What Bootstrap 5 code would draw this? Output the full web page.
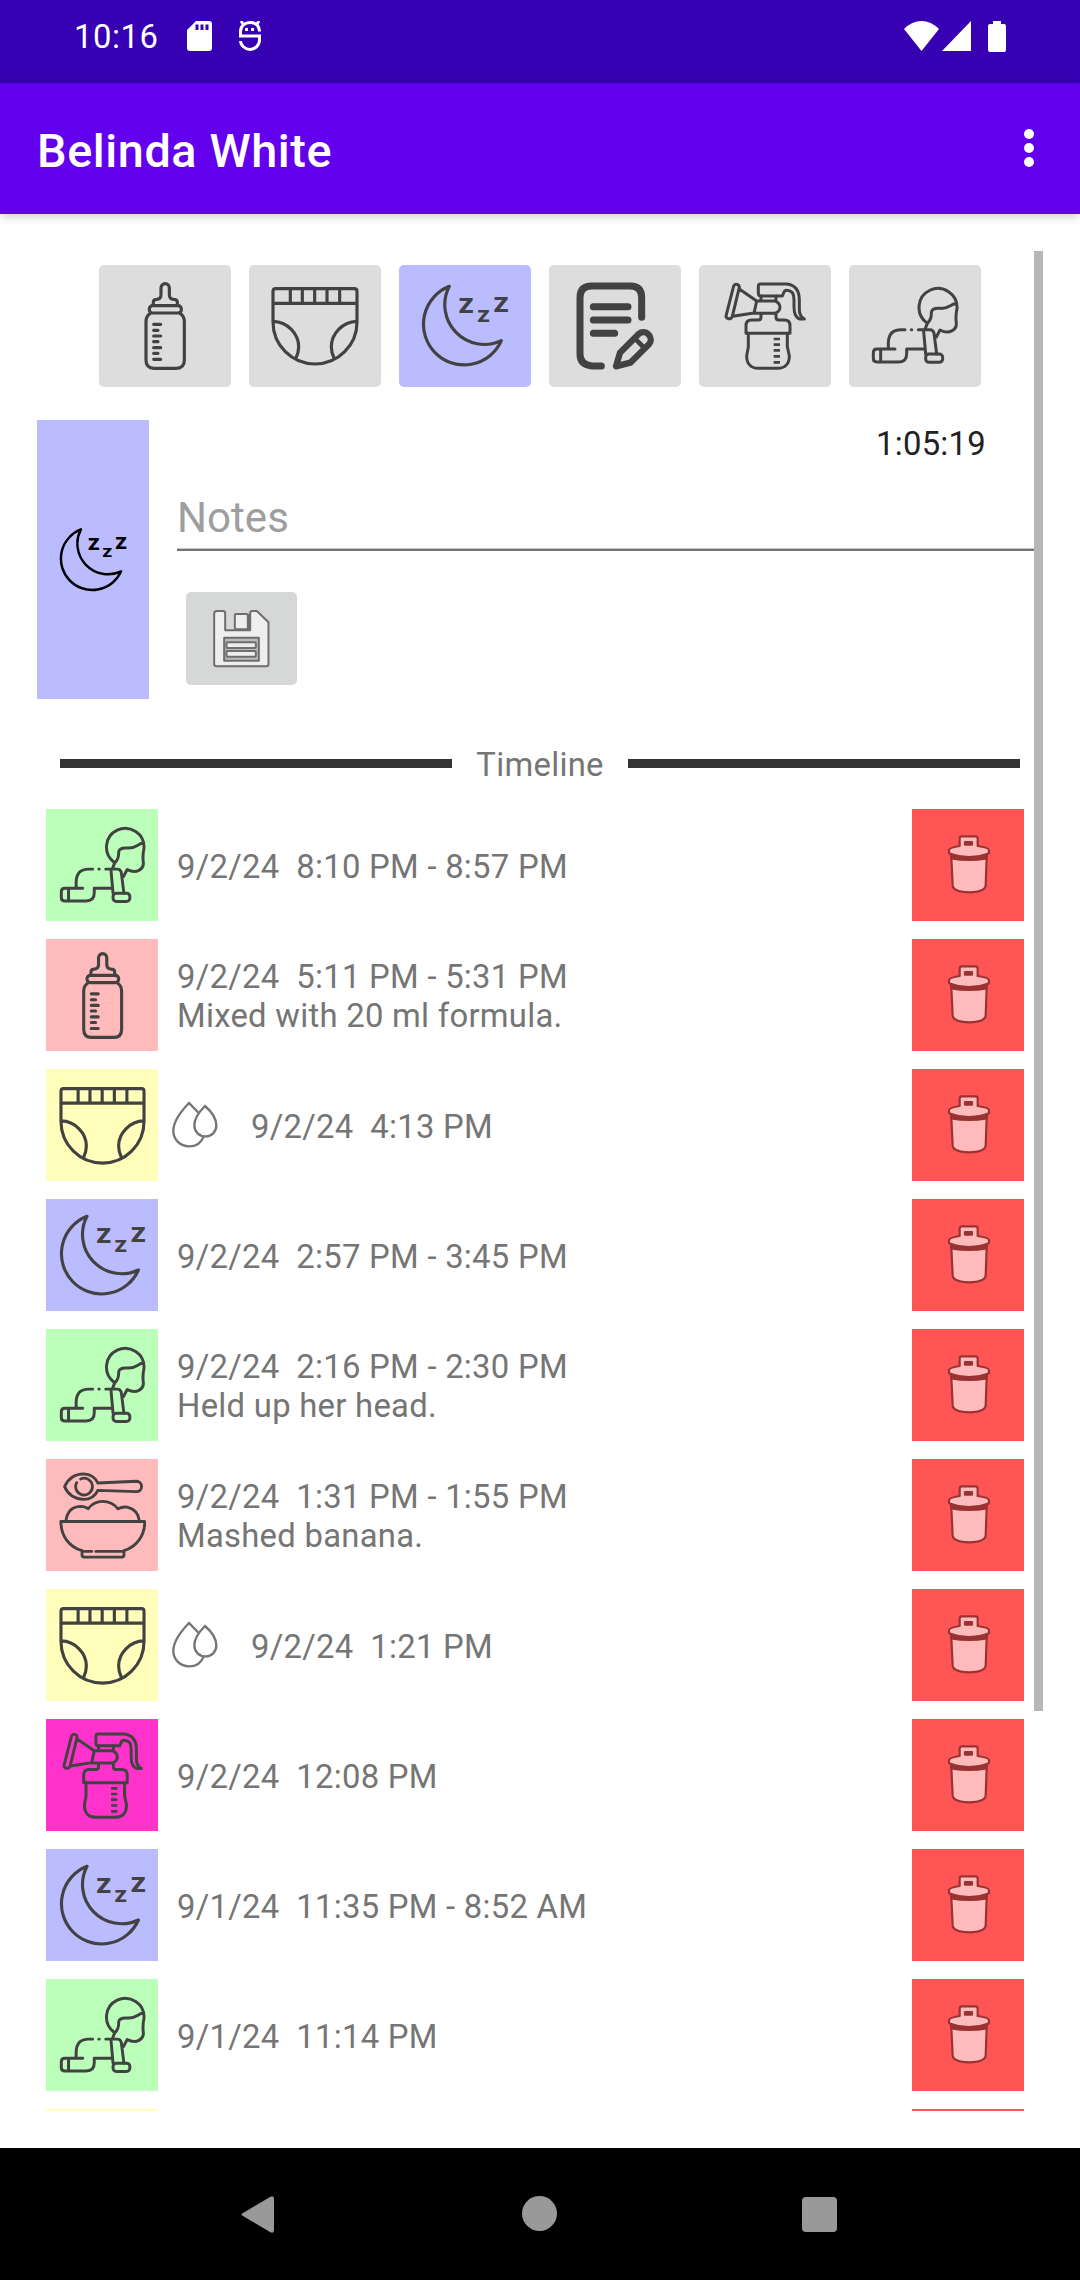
<!DOCTYPE html>
<html lang="en">
<head>
<meta charset="utf-8">
<meta name="viewport" content="width=device-width, initial-scale=1">
<title>Belinda White</title>
<link rel="stylesheet" href="https://cdn.jsdelivr.net/npm/bootstrap@5.3.0/dist/css/bootstrap.min.css">
<style>
body{font-family:Roboto,"Noto Sans",sans-serif;font-size:32.8px;letter-spacing:.28px;line-height:38.7px;color:#757575;background:#fff;width:1080px;height:2280px;overflow:hidden}
svg{display:block;flex:none}
.status-strip{height:83px;background:#3700b3;padding:0 74px 11px 74px}
.clock{letter-spacing:.58px;padding-top:3px}
.sd-icon{margin-left:28px}
.app-bar{height:131px;background:#6200ee;padding:0 45px 0 37px;box-shadow:0 2px 10px rgba(0,0,0,.22);position:relative;z-index:2}
.app-bar svg{margin-bottom:2px}
.app-title{font-size:46.8px;font-weight:500;letter-spacing:.58px;line-height:56px;padding-top:5px}
.screen{height:1934px;padding:37px}
.scroller{height:1860px;overflow:hidden;position:relative;padding-top:14px}
.scroll-thumb{position:absolute;right:0;top:0;width:9px;height:1460px;background:#b7b7b7}
.kinds{gap:18px}
.kind{width:132px;height:122px;border-radius:5px;background:#ddd;border:0;padding:0;color:#424242}
.sleep{background:#bbf!important}.play{background:#bfb}.feed{background:#fbb}.change{background:#ffb}.pump{background:#ff33cc}
.entry{height:279px;margin-top:33px}
.entry-kind{width:112px;color:#000}
.entry-form{margin-left:28px}
.timer{color:#212121;padding:5px 57px 0 0;height:43px;line-height:39px}
.notes{height:88px;font-size:42.1px;letter-spacing:0;color:#9e9e9e;border-bottom:2px solid #747474;box-shadow:inset 0 -1px #c4c4c4;padding-top:30px;line-height:50px}
.save-btn{width:111px;height:93px;margin:41px 0 0 9px;border-radius:5px;border:0;background:#d6d8d7;padding:0}
.divider{height:110px;padding:22px 23px 0 23px;gap:24px}
.divider i{height:9px;background:#333;flex:1;margin-top:-3px}
.log{gap:18px;padding:0 19px 0 9px}
.log-row{height:112px;flex:none}
.tile{width:112px;height:112px;flex:none;color:#424242}
.del{background:#f55}
.when{white-space:pre;margin-left:19px;padding-top:4px}
.wet-icon{margin:0 13px}
.sys-nav{height:132px;background:#000}
</style>
<script src="https://cdn.jsdelivr.net/npm/bootstrap@5.3.0/dist/js/bootstrap.bundle.min.js"></script>
</head>
<body>
<svg width="0" height="0" class="d-none">
<symbol id="bottle" viewBox="0 0 264 264"><g fill="none" stroke="currentColor" stroke-width="9.500" stroke-linecap="round" stroke-linejoin="round"><path d="M97 69V61Q97 52 107 52Q120 51 120 38V18A12.500 13 0 0 1 145 18V38Q145 51 158 52Q169 52 169 61V69"/><rect x="85" y="71" width="96" height="22" rx="10"/><path d="M88 94Q75 102 75 119V235Q75 259 99 259H166Q190 259 190 235V119Q190 102 177 94"/><path d="M98 127H119M98 145H111M98 162H119M98 179H111M98 197H119M98 214H111M98 232H119"/></g></symbol>
<symbol id="diaper" viewBox="0 0 264 264"><g fill="none" stroke="currentColor" stroke-width="9.500"><path d="M6 120V28Q6 20 14 20H250Q258 20 258 28V120A126 126 0 0 1 6 120ZM6 64H258M58 20V64M94 20V64M131 20V64M168 20V64M206 20V64M6 118C50 119 83 156 83 194Q83 211 75 228M258 118C214 119 181 156 181 194Q181 211 189 228"/></g></symbol>
<symbol id="moon" viewBox="0 0 264 264"><path d="M85 13A122 122 0 1 0 241 176A119 119 0 0 1 85 13Z" fill="none" stroke="currentColor" stroke-width="9.500" stroke-linejoin="round"/><g fill="currentColor" font-family="Roboto" font-weight="700" letter-spacing="0"><text x="112" y="94" font-size="85" textLength="47" lengthAdjust="spacingAndGlyphs">z</text><text x="168" y="120" font-size="67" textLength="39" lengthAdjust="spacingAndGlyphs">z</text><text x="217" y="91" font-size="85" textLength="47" lengthAdjust="spacingAndGlyphs">z</text></g></symbol>
<symbol id="memo" viewBox="0 0 264 264"><g fill="none" stroke="currentColor" stroke-width="21" stroke-linecap="round" stroke-linejoin="round"><path d="M91 252H62Q27 248 27 217V47Q27 12 62 12H178Q212 12 212 47V106M67 74H171M67 114H171M67 154H131"/><path stroke-width="19" d="M135 253L147 212L203 156A22 22 0 0 1 234 187L178 242Z"/><path stroke-width="14" d="M192 170L220 198"/></g></symbol>
<symbol id="pumper" viewBox="0 0 264 264"><g fill="none" stroke="currentColor" stroke-width="9" stroke-linejoin="round" stroke-linecap="round"><path d="M38 12Q42 4 50 8Q57 11 54 20L34 103Q30 112 22 110Q13 107 16 98ZM56 22L107 57M35 103L99 93M107 57H158A19 18.500 0 0 1 158 94H99ZM120 42V57M165 42V57M120 95V106Q120 114 112 114H92Q75 114 75 131V154H207V131Q207 114 190 114H173Q165 114 165 106V95"/><path d="M118 6H197Q235 10 235 54V84Q235 102 250 111H236Q219 105 219 75V54C219 33 212 25 197 25Q190 25 188 33L184 42H120Q112 42 112 34V14Q112 6 118 6ZM82 154V194L77 222C77 247 91 259 112 259H170C191 259 205 247 205 222L199 194V154"/><path stroke-linecap="butt" stroke-width="8" d="M158 171H177M158 188H177M158 205H177M158 223H177M158 241H177"/></g></symbol>
<symbol id="baby" viewBox="0 0 264 264"><g fill="none" stroke="currentColor" stroke-width="9" stroke-linejoin="round" stroke-linecap="round"><path d="M167 122A57 57 0 1 1 258 79Q253 102 256 124C257 143 235 159 207 144L196 165M257 63C236 67 235 81 208 79Q183 77 181 91C182 108 178 116 169 124L162 142M142 143H177Q186 143 189 153L197 216M158 149L164 216M72 201H18Q7 201 7 212V229Q7 240 18 240H82Q107 240 107 215V201H160M29 201V240M52 201V182Q53 143 90 143H102M121 143H122"/><rect x="164" y="216" width="51" height="25" rx="10"/></g></symbol>
<symbol id="bowl" viewBox="0 0 264 264"><g transform="translate(132 132) scale(1.018) translate(-216 -195)" fill="none" stroke="currentColor" stroke-width="8.500" stroke-linejoin="round" stroke-linecap="round"><path d="M155 300C115 288 92 255 92 213H342C342 255 318 288 280 300M155 302V313Q155 319 161 319H274Q280 319 280 313V302M155 302H184M196 302H280M107 211Q112 170 150 168Q165 168 173 175Q190 153 216 153Q245 153 262 175Q275 168 290 170Q322 178 326 211M202 98L317 93A15 15 0 0 1 317 124L202 120Q190 147 160 147Q118 145 103 109Q119 72 160 71Q190 72 202 98M151 86A25 25 0 1 1 139 97"/></g></symbol>
<symbol id="drops" viewBox="424 124 144 144"><path d="M507 160L478 130C452 157 431 186 431 213C431 240 452 260 478 260C500 260 515 250 522 230M526 139C505 160 494 180 494 197C494 217 509 230 527 230C546 230 560 217 560 197C560 180 548 158 526 139Z" fill="none" stroke="#757575" stroke-width="7"/></symbol>
<symbol id="trash" viewBox="66 57 336 336"><g fill="#fbb" stroke="#933" stroke-width="6.500" stroke-linejoin="round"><path d="M184 203L188 287Q190 306 238 307Q285 306 287 287L290 203Z"/><path d="M183 196L184 205Q237 215 290 205L291 196Z" fill="#933"/><path d="M209 168V146Q209 139 215 139H257Q263 139 263 146V168Q296 173 297 180V190Q270 201 237 201Q205 201 177 190V180Q178 173 209 168Z"/><rect x="225" y="156" width="21" height="8" fill="#933"/></g></symbol>
</svg>

<header class="status-strip d-flex align-items-center text-white">
  <span class="clock lh-1">10:16</span>
  <svg class="sd-icon" width="25" height="30" viewBox="0 0 25 30"><path fill="#fff" d="M9 0H22Q25 0 25 3V27Q25 30 22 30H3Q0 30 0 27V9Z"/><path d="M10 3.500V9M15 3.500V9M20 3.500V9" stroke="#3700b3" stroke-width="3"/></svg>
  <svg style="margin-left:27px" width="22" height="30" viewBox="0 0 22 30" fill="none" stroke="#fff" stroke-width="3"><path d="M20.500 10.500C20 4 16 1.500 11 1.500S1.500 5 1.500 10.500V15H20.500V19C20.500 24 16 28.500 11 28.500S1.500 24 1.500 20"/><path d="M2 0L4 3M20 0L18 3"/><path d="M7.500 7V10M13.500 7V10" stroke-width="3"/></svg>
  <div class="ms-auto d-flex">
  <svg width="35" height="30" viewBox="0 0 35 30" fill="#fff"><path d="M0 8Q8 0 17.500 0T35 8L17.500 30Z"/></svg>
  <svg style="margin-left:3px" width="29" height="30" viewBox="0 0 29 30" fill="#fff"><path d="M29 0V30H0Z"/></svg>
  <svg style="margin-left:17px" width="18" height="31" viewBox="0 0 18 31" fill="#fff"><path d="M5 0H13V3H16Q18 3 18 5V29Q18 31 16 31H2Q0 31 0 29V5Q0 3 2 3H5Z"/></svg>
  </div>
</header>
<nav class="app-bar d-flex align-items-center justify-content-between text-white">
  <div class="app-title">Belinda White</div>
  <svg width="12" height="40" viewBox="0 0 12 40" fill="#fff"><circle cx="6" cy="6" r="5"/><circle cx="6" cy="20" r="5"/><circle cx="6" cy="34" r="5"/></svg>
</nav>

<main class="screen">
<div class="scroller">
  <div class="kinds d-flex justify-content-center">
    <button class="kind d-flex align-items-center justify-content-center"><svg width="88" height="88"><use href="#bottle"/></svg></button>
    <button class="kind d-flex align-items-center justify-content-center"><svg width="88" height="88"><use href="#diaper"/></svg></button>
    <button class="kind sleep d-flex align-items-center justify-content-center"><svg width="88" height="88"><use href="#moon"/></svg></button>
    <button class="kind d-flex align-items-center justify-content-center"><svg width="88" height="88"><use href="#memo"/></svg></button>
    <button class="kind d-flex align-items-center justify-content-center"><svg width="88" height="88"><use href="#pumper"/></svg></button>
    <button class="kind d-flex align-items-center justify-content-center"><svg width="88" height="88"><use href="#baby"/></svg></button>
  </div>
  <section class="entry d-flex">
    <div class="entry-kind sleep d-flex align-items-center justify-content-center"><svg width="68" height="68"><use href="#moon"/></svg></div>
    <div class="entry-form flex-grow-1">
      <div class="timer text-end">1:05:19</div>
      <div class="notes">Notes</div>
      <button class="save-btn d-flex align-items-center justify-content-center"><svg width="57" height="58" viewBox="580 630 170 174"><g fill="#eee" stroke="#6e6e6e" stroke-width="6" stroke-linejoin="round"><path d="M591 633H609Q616 633 616 640V691H691V640Q691 633 698 633H711L746 667V792Q746 799 739 799H591Q583 799 583 792V641Q583 633 591 633Z"/><path d="M687 642V689" stroke-width="9"/><rect x="645" y="642" width="39" height="46" rx="4"/><rect x="613" y="713" width="104" height="69" fill="#bbb"/><rect x="620" y="727" width="88" height="17" rx="3"/><rect x="620" y="753" width="88" height="17" rx="3"/></g></svg></button>
    </div>
  </section>
  <div class="divider d-flex align-items-center justify-content-center"><i></i><span>Timeline</span><i></i></div>
  <div class="log d-flex flex-column">
    <div class="log-row d-flex align-items-center"><div class="tile play d-flex align-items-center justify-content-center"><svg width="87" height="87"><use href="#baby"/></svg></div><div class="when">9/2/24  8:10 PM - 8:57 PM</div><div class="tile del ms-auto"><svg width="112" height="112"><use href="#trash"/></svg></div></div>
    <div class="log-row d-flex align-items-center"><div class="tile feed d-flex align-items-center justify-content-center"><svg width="87" height="87"><use href="#bottle"/></svg></div><div class="when">9/2/24  5:11 PM - 5:31 PM<br>Mixed with 20 ml formula.</div><div class="tile del ms-auto"><svg width="112" height="112"><use href="#trash"/></svg></div></div>
    <div class="log-row d-flex align-items-center"><div class="tile change d-flex align-items-center justify-content-center"><svg width="87" height="87"><use href="#diaper"/></svg></div><svg class="wet-icon" width="48" height="48"><use href="#drops"/></svg><div class="when">9/2/24  4:13 PM</div><div class="tile del ms-auto"><svg width="112" height="112"><use href="#trash"/></svg></div></div>
    <div class="log-row d-flex align-items-center"><div class="tile sleep d-flex align-items-center justify-content-center"><svg width="87" height="87"><use href="#moon"/></svg></div><div class="when">9/2/24  2:57 PM - 3:45 PM</div><div class="tile del ms-auto"><svg width="112" height="112"><use href="#trash"/></svg></div></div>
    <div class="log-row d-flex align-items-center"><div class="tile play d-flex align-items-center justify-content-center"><svg width="87" height="87"><use href="#baby"/></svg></div><div class="when">9/2/24  2:16 PM - 2:30 PM<br>Held up her head.</div><div class="tile del ms-auto"><svg width="112" height="112"><use href="#trash"/></svg></div></div>
    <div class="log-row d-flex align-items-center"><div class="tile feed d-flex align-items-center justify-content-center"><svg width="87" height="87"><use href="#bowl"/></svg></div><div class="when">9/2/24  1:31 PM - 1:55 PM<br>Mashed banana.</div><div class="tile del ms-auto"><svg width="112" height="112"><use href="#trash"/></svg></div></div>
    <div class="log-row d-flex align-items-center"><div class="tile change d-flex align-items-center justify-content-center"><svg width="87" height="87"><use href="#diaper"/></svg></div><svg class="wet-icon" width="48" height="48"><use href="#drops"/></svg><div class="when">9/2/24  1:21 PM</div><div class="tile del ms-auto"><svg width="112" height="112"><use href="#trash"/></svg></div></div>
    <div class="log-row d-flex align-items-center"><div class="tile pump d-flex align-items-center justify-content-center"><svg width="87" height="87"><use href="#pumper"/></svg></div><div class="when">9/2/24  12:08 PM</div><div class="tile del ms-auto"><svg width="112" height="112"><use href="#trash"/></svg></div></div>
    <div class="log-row d-flex align-items-center"><div class="tile sleep d-flex align-items-center justify-content-center"><svg width="87" height="87"><use href="#moon"/></svg></div><div class="when">9/1/24  11:35 PM - 8:52 AM</div><div class="tile del ms-auto"><svg width="112" height="112"><use href="#trash"/></svg></div></div>
    <div class="log-row d-flex align-items-center"><div class="tile play d-flex align-items-center justify-content-center"><svg width="87" height="87"><use href="#baby"/></svg></div><div class="when">9/1/24  11:14 PM</div><div class="tile del ms-auto"><svg width="112" height="112"><use href="#trash"/></svg></div></div>
    <div class="log-row d-flex align-items-center"><div class="tile change"></div><div class="tile del ms-auto"></div></div>
  </div>
  <div class="scroll-thumb"></div>
</div>
</main>
<footer class="sys-nav"><svg width="1080" height="132" viewBox="0 0 1080 132" fill="#999"><path d="M243 65L270 49Q274 47 274 51V82Q274 86 270 84L243 68Q240 66.500 243 65Z"/><circle cx="539.500" cy="65.500" r="17.500"/><rect x="802" y="49" width="35" height="35" rx="4"/></svg></footer>
</body>
</html>
